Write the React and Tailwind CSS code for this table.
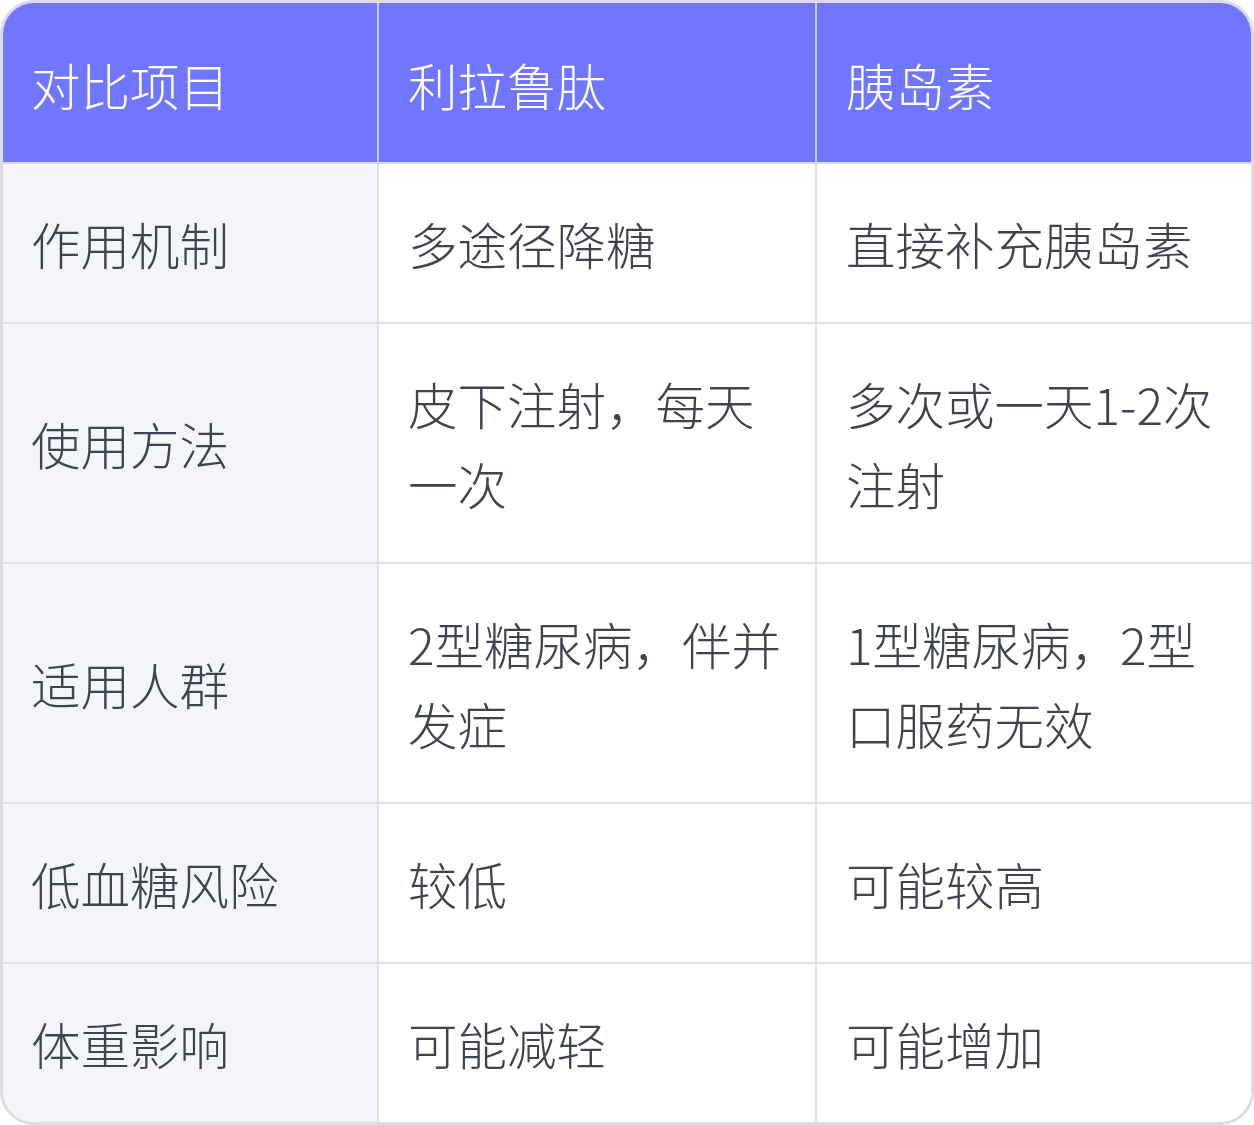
const rows = [
  ["作用机制", "多途径降糖", "直接补充胰岛素"],
  ["使用方法", "皮下注射，每天一次", "多次或一天1-2次注射"],
  ["适用人群", "2型糖尿病，伴并发症", "1型糖尿病，2型口服药无效"],
  ["低血糖风险", "较低", "可能较高"],
  ["体重影响", "可能减轻", "可能增加"],
];

const head = ["对比项目", "利拉鲁肽", "胰岛素"];

export default function App() {
  return (
    <div
      className="w-[1254px] h-[1125px] bg-white"
      style={{ fontFamily: '"Noto Sans CJK SC", "Noto Sans", sans-serif' }}
    >
      <div className="border-[3px] border-[#dcdde3] rounded-[34px] overflow-hidden">
        <div className="grid grid-cols-[376px_438px_1fr] text-[49.5px] leading-[80px] font-light">
          {head.map((h, i) => (
            <div
              key={h}
              className={`bg-[#7076ff] text-white h-[161px] flex items-center pt-[4px] border-b-2 border-[#d6d8e6] ${i === 0 ? "pl-[28px]" : "pl-[29px]"} ${i < 2 ? "border-r-2 border-r-[#c9ccf0]" : ""}`}
            >
              {h}
            </div>
          ))}
          {rows.map((r, ri) =>
            r.map((c, ci) => (
              <div
                key={ri + "-" + ci}
                className={`flex items-center pt-[40px] pb-[38px] text-[#3f4350] ${ci === 0 ? "bg-[#f4f5f9] pl-[28px] pr-[28px]" : "bg-white pl-[29px] pr-[18px]"} ${ci < 2 ? "border-r-2 border-r-[#e0e1e6]" : ""} ${ri < rows.length - 1 ? "border-b-2 border-b-[#e0e1e6]" : ""}`}
              >
                <span>{c}</span>
              </div>
            ))
          )}
        </div>
      </div>
    </div>
  );
}
